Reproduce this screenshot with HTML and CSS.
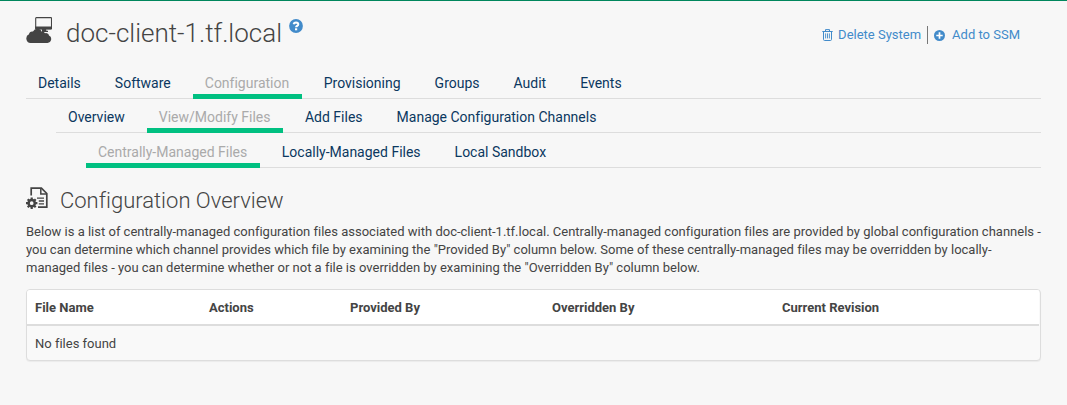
FILE: index.html
```
<!DOCTYPE html>
<html lang="en">
<head>
<meta charset="utf-8">
<title>doc-client-1.tf.local</title>
<link rel="stylesheet" href="styles.css">
</head>
<body>
<main class="page">
  <header class="page-header">
    <svg class="system-icon" viewBox="0 0 26 26"><rect x="9.7" y=".6" width="15.8" height="11.4" rx=".6" fill="none" stroke="#444" stroke-width="1.1"/><path d="M9.2 9.6h16.8v1.8q0 .9-.9.9H10.1q-.9 0-.9-.9zM16 12h4l.4 1.8H22v1.1h-6z" fill="#444"/><path d="M4.5 25.9a4.5 4.5 0 0 1-1.5-8.6 3 3 0 0 1 4-2.7 4.8 4.8 0 0 1 8.8.2 3 3 0 0 1 3.2 1.4 3 3 0 0 1 4 2.3 3.9 3.9 0 0 1-1.5 7.4z" fill="#444"/></svg>
    <h1 class="title">doc-client-1.tf.local</h1>
    <svg class="help-icon" viewBox="0 0 14 14"><circle cx="7" cy="7" r="6.9" fill="#428bca"/><path d="M4.6 5.2Q5 3.5 7 3.5q2.3.1 2.3 1.8 0 1-1.3 1.7-.9.5-.9 1.2" fill="none" stroke="#fff" stroke-width="2"/><path d="M6 9.3h2.2v2H6z" fill="#fff"/></svg>
    <div class="toolbar">
      <a class="tool"><svg class="trash-icon" viewBox="0 0 11 12" fill="none" stroke="#428bca"><path d="M.3 2.5h10.4M3.5 2.2V.6h4v1.6M1.5 2.8v7.6q0 1.1 1.1 1.1h5.8q1.1 0 1.1-1.1V2.8" stroke-width="1"/><path d="M3.6 4.4v5M5.5 4.4v5M7.4 4.4v5" stroke-width=".9"/></svg><span>Delete System</span></a>
      <a class="tool tool-add"><svg class="plus-icon" viewBox="0 0 11 11"><circle cx="5.5" cy="5.5" r="5.5" fill="#428bca"/><path d="M5.5 2.3v6.4M2.3 5.5h6.4" stroke="#fff" stroke-width="1.7"/></svg><span>Add to SSM</span></a>
    </div>
  </header>
  <nav class="tabs tabs-main"><a class="tab">Details</a><a class="tab">Software</a><a class="tab active">Configuration</a><a class="tab">Provisioning</a><a class="tab">Groups</a><a class="tab">Audit</a><a class="tab">Events</a></nav>
  <nav class="tabs tabs-second"><a class="tab">Overview</a><a class="tab active">View/Modify Files</a><a class="tab">Add Files</a><a class="tab">Manage Configuration Channels</a></nav>
  <nav class="tabs tabs-third"><a class="tab active">Centrally-Managed Files</a><a class="tab">Locally-Managed Files</a><a class="tab">Local Sandbox</a></nav>
  <div class="section-header">
    <svg class="config-icon" viewBox="0 0 22 22"><path d="M5.2 8.5V1.1h10.2l5.4 5.4v13.7H12" fill="none" stroke="#444" stroke-width="1.7"/><path d="M14.8 1v6h6" fill="none" stroke="#444" stroke-width="1.5"/><path d="M11 11.2h7M12.8 14h5.2M12.8 16.8h5.2" stroke="#444" stroke-width="1.3"/><circle cx="5.7" cy="16.2" r="3.1" fill="none" stroke="#444" stroke-width="2.5"/><path d="M5.7 10.5v2.2M5.7 19.7v2.2M0 16.2h2.2M9.2 16.2h2.2M1.7 12.2l1.5 1.5M8.2 18.7l1.5 1.5M9.7 12.2l-1.5 1.5M3.2 18.7l-1.5 1.5" stroke="#444" stroke-width="2.2"/></svg>
    <h2 class="subtitle">Configuration Overview</h2>
  </div>
  <p class="intro">Below is a list of centrally-managed configuration files associated with doc-client-1.tf.local. Centrally-managed configuration files are provided by global configuration channels -<br>you can determine which channel provides which file by examining the "Provided By" column below. Some of these centrally-managed files may be overridden by locally-<br>managed files - you can determine whether or not a file is overridden by examining the "Overridden By" column below.</p>
  <div class="panel">
    <div class="row head"><span>File Name</span><span>Actions</span><span>Provided By</span><span>Overridden By</span><span>Current Revision</span></div>
    <div class="row empty"><span>No files found</span></div>
  </div>
</main>
</body>
</html>
```
FILE: styles.css
```
* { box-sizing: border-box; }
body {
  margin: 0;
  height: 405px;
  overflow: hidden;
  border-top: 1px solid #00875d;
  background: #f7f7f7;
  color: #444;
  font: 13px/18px Roboto, sans-serif;
  font-variant-ligatures: none;
}
svg { display: block; flex: none; }
.page { padding: 0 26px; }
.page-header { display: flex; align-items: flex-start; height: 66px; }
.system-icon { width: 26px; height: 26px; margin-top: 16px; }
.title {
  margin: 15px 0 0 14px;
  font-size: 26px;
  line-height: 34px;
  font-weight: 300;
  white-space: nowrap;
}
.help-icon { width: 14px; height: 14px; margin: 18px 0 0 7px; }
.toolbar { display: flex; margin: 25px 21px 0 auto; color: #428bca; }
.tool { display: flex; align-items: center; height: 18px; white-space: nowrap; }
.trash-icon { width: 11px; height: 12px; margin-right: 5px; }
.tool-add { margin-left: 6px; padding-left: 6px; border-left: 1px solid #777; }
.plus-icon { width: 11px; height: 11px; margin-right: 7px; }
.tabs {
  display: flex;
  gap: 10px;
  border-bottom: 1px solid #ddd;
  font-size: 14px;
  color: #0b385f;
}
.tabs-main { height: 32px; }
.tabs-second { height: 34px; margin-left: 30px; }
.tabs-third { height: 35px; margin-left: 60px; }
.tab {
  display: flex;
  align-items: flex-end;
  padding: 0 12px 1px;
  margin-bottom: -1px;
  border-bottom: 5px solid transparent;
  line-height: 20px;
  white-space: nowrap;
}
.active { padding-right: 12.5px; color: #aaa; border-bottom-color: #00c081; }
.section-header { display: flex; align-items: flex-start; height: 55px; padding-top: 19px; }
.config-icon { width: 22px; height: 22px; }
.subtitle {
  margin: -1px 0 0 12px;
  font-size: 22px;
  line-height: 30px;
  font-weight: 300;
}
.intro { margin: 0 0 12px; white-space: nowrap; }
.panel {
  height: 72px;
  border: 1px solid #ddd;
  border-radius: 4px;
  background: #f9f9f9;
  box-shadow: 0 1px 1px rgba(0, 0, 0, 0.05);
  overflow: hidden;
}
.row { display: grid; align-items: center; padding: 2px 0 0 8px; }
.head {
  grid-template-columns: 174px 141px 202px 230px 1fr;
  height: 36px;
  margin-right: 1px;
  background: #fff;
  border-bottom: 2px solid #ddd;
  font-weight: 700;
}
.empty { height: 34px; }
```
